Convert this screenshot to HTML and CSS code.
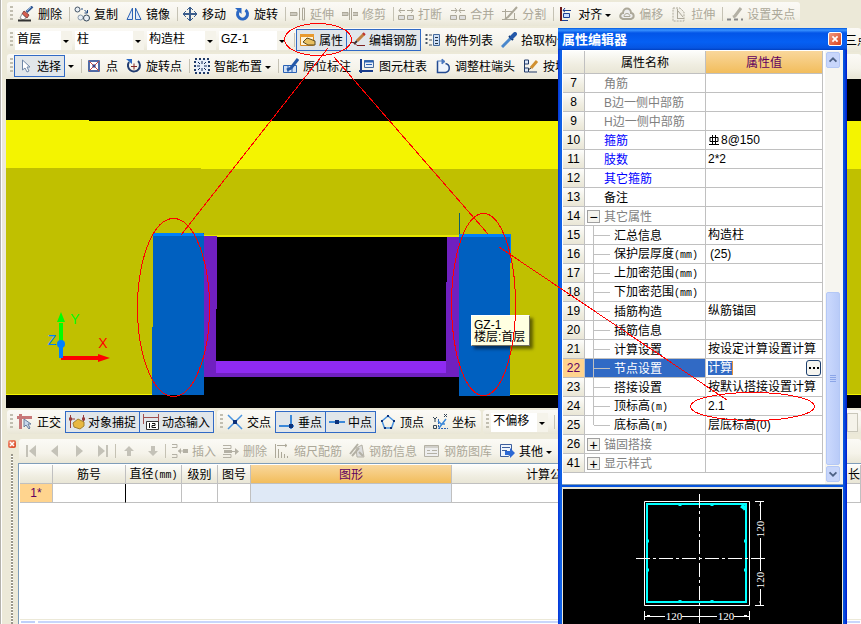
FILE: index.html
```html
<!DOCTYPE html>
<html lang="zh-CN">
<head>
<meta charset="utf-8">
<title>属性编辑器</title>
<link rel="stylesheet" href="styles.css">
</head>
<body>
<div class="app">
  <header class="bars">
    <div class="bar bar-fit">
      <i class="grip"></i>
      <button class="tool"><svg viewBox="0 0 16 16"><path d="M14.500 .5 8.500 6" stroke="#345a94" stroke-width="2.500"/><path d="M13 1 9 5" stroke="#8fb4e0"/><path d="M6 5l5 4-2 3-5-4z" fill="#d86050" stroke="#844"/><path d="M4 8l4 4-3 2-3-2z" fill="#fff" stroke="#999"/><path d="M0 14.500h13" stroke="#333" stroke-width="2"/></svg>删除</button>
      <i class="sep"></i>
      <button class="tool"><svg viewBox="0 0 16 16"><circle cx="3.500" cy="3.500" r="2.500" fill="#e8eef4" stroke="#456"/><circle cx="6.500" cy="11.500" r="2.500" fill="#e8eef4" stroke="#89a"/><circle cx="12.500" cy="12" r="3" fill="#e8eef4" stroke="#345"/><path d="M7 3h2M10.500 4l3 3m0-3v3h-3" stroke="#234a80" fill="none"/></svg>复制</button>
      <button class="tool"><svg viewBox="0 0 16 16"><path d="M6.500 2v11.500H1z" fill="#dfe9f8" stroke="#2b62b4"/><path d="M9.500 2v11.500H15z" fill="#dfe9f8" stroke="#2b62b4"/></svg>镜像</button>
      <i class="sep"></i>
      <button class="tool"><svg viewBox="0 0 16 16"><path d="M8 1v14M1 8h14" stroke="#3c5e8c" stroke-width="2"/><path d="M5 4l3-3 3 3M5 12l3 3 3-3M4 5 1 8l3 3M12 5l3 3-3 3" fill="none" stroke="#3c5e8c"/></svg>移动</button>
      <button class="tool"><svg viewBox="0 0 16 16"><path d="M11.500 4a5 5 0 1 1-7 1" fill="none" stroke="#2b68c4" stroke-width="3"/><path d="M1 2h6.500v6z" fill="#2b68c4"/></svg>旋转</button>
      <i class="sep"></i>
      <button class="tool" disabled><svg viewBox="0 0 16 16"><path d="M0 6.500h7v3H0z" fill="#ccc9be" stroke="#aca899"/><path d="M9.500 2v12M12.500 2h2v12h-2z" stroke="#aca899" fill="none"/></svg>延伸</button>
      <button class="tool" disabled><svg viewBox="0 0 16 16"><path d="M0 6.500h6v3H0zM11 6.500h5v3h-5" fill="#ccc9be" stroke="#aca899"/><path d="M7.500 2v12M9.500 2v12" stroke="#aca899" fill="none"/></svg>修剪</button>
      <i class="sep"></i>
      <button class="tool" disabled><svg viewBox="0 0 16 16"><path d="M.5 9.500h6v4h-6zM9.500 9.500h6v4h-6z" fill="#ddd" stroke="#aca899"/><path d="M1 4.500h6M9 4.500h6M3 2 1 4.500 3 7M13 2l2 2.500L13 7" fill="none" stroke="#aca899"/></svg>打断</button>
      <button class="tool" disabled><svg viewBox="0 0 16 16"><path d="M.5 9.500h6v4h-6zM9.500 9.500h6v4h-6z" fill="#ddd" stroke="#aca899"/><path d="M1 4.500h6M9 4.500h6M5 2l2 2.500L5 7M11 2 9 4.500 11 7" fill="none" stroke="#aca899"/></svg>合并</button>
      <button class="tool" disabled><svg viewBox="0 0 16 16"><path d="M0 5.500h11M3.500 3v11M0 13.500h15M12.500 7v7" fill="none" stroke="#aca899"/><path d="M15 1 6 11l-3 2" fill="none" stroke="#aca899" stroke-width="2"/></svg>分割</button>
      <i class="sep"></i>
      <button class="tool"><svg viewBox="0 0 16 16"><path d="M3 1v14" stroke="#701818" stroke-width="2"/><path d="M5.500 7.500h6v4h-6z" fill="#c8dcff" stroke="#1c3f94"/><path d="M5 4.500h8M7 2 5 4.500 7 6M4 14.500h6" fill="none" stroke="#1c3f94"/></svg>对齐<i class="caret"></i></button>
      <button class="tool" disabled><svg viewBox="0 0 16 16"><path d="M4 13c-5-2-2-6 0-6 0-6 8-6 8 0 3 0 4 5 0 6z" fill="#eee" stroke="#aca899" stroke-width="2"/><path d="M5 10.500c0-4 6-4 6 0z" fill="none" stroke="#aca899"/></svg>偏移</button>
      <button class="tool" disabled><svg viewBox="0 0 16 16"><path d="M2 2h7l4 4v9H2z" fill="#f2f0e8" stroke="#aca899" stroke-dasharray="2 1"/><path d="M6.500 3v9M6 12.500h7M7 5l5 6" stroke="#aca899" fill="none"/></svg>拉伸</button>
      <i class="sep"></i>
      <button class="tool" disabled><svg viewBox="0 0 16 16"><path d="M14 2 8 10l-2 1" stroke="#b4b1a5" stroke-width="3"/><path d="M0 13.500h4m3 0h4m3 0h2" stroke="#888" stroke-width="2"/></svg>设置夹点</button>
    </div>
    <div class="bar">
      <i class="grip"></i>
      <span class="combo combo-s"><select aria-label="楼层"><option>首层</option></select></span>
      <span class="combo"><select aria-label="构件类型"><option>柱</option></select></span>
      <span class="combo"><select aria-label="构件分类"><option>构造柱</option></select></span>
      <span class="combo"><select aria-label="构件"><option>GZ-1</option></select></span>
      <i class="sep"></i>
      <button class="tool on"><svg viewBox="0 0 16 16"><path d="M.5 2.500h13v11H.5z" fill="#fff4d8" stroke="#d98a20"/><path d="M0 3.500h14" stroke="#e89a30" stroke-width="3"/><path d="M3 10l4-4 3 1 5 2v4H8z" fill="#e8c060" stroke="#5a4a20"/></svg>属性</button>
      <button class="tool on"><svg viewBox="0 0 16 16"><path d="M14 2 7 9" stroke="#c08040" stroke-width="3"/><path d="M7 9l-3 3" stroke="#333" stroke-width="2"/><path d="M0 10.500h4l3 3h8" fill="none" stroke="#802020"/><path d="M13 1l2 2" stroke="#c03030" stroke-width="2"/></svg>编辑钢筋</button>
      <button class="tool"><svg viewBox="0 0 16 16"><path d="M1.500 2v12" stroke="#456" stroke-width="2" stroke-dasharray="2 2"/><path d="M4 3h3M4 8h3M4 13h3" stroke="#456"/><path d="M8.500 2.500h6v11h-6z" fill="#cfe0f6" stroke="#456a9c"/><path d="M10 5.500h3M10 8.500h3M10 11.500h3" stroke="#234"/></svg>构件列表</button>
      <button class="tool"><svg viewBox="0 0 16 16"><path d="M10 6 3 13l-2 2" stroke="#4a88cc" stroke-width="3"/><path d="M8 4l4 4" stroke="#103878" stroke-width="2"/><path d="M14 2l-3 3" stroke="#2458a8" stroke-width="4" stroke-linecap="round"/></svg>拾取构件</button>
      <span class="stretch"></span>
      <span class="edge">三点</span>
    </div>
    <div class="bar">
      <i class="grip"></i>
      <button class="tool on"><svg viewBox="0 0 16 16"><path d="M4.500 2v10l2.500-2 2 4 2-1-2-4h3z" fill="#fff" stroke="#7088a8"/></svg>选择</button>
      <button class="drop" aria-label="选择选项"><i class="caret"></i></button>
      <i class="sep"></i>
      <button class="tool"><svg viewBox="0 0 16 16"><path d="M3 3h10v10H3z" fill="#fff" stroke="#183c8c" stroke-width="1.500"/><path d="M3 3l10 10M13 3 3 13" stroke="#c04848"/><path d="M6 8h4M8 6v4" stroke="#183c8c"/></svg>点</button>
      <button class="tool"><svg viewBox="0 0 16 16"><path d="M3 4a6 6 0 1 0 9-1" fill="none" stroke="#223c70" stroke-width="2"/><path d="M0 1h6v5z" fill="#2b68c4"/><path d="M5 8.500h6M8 5.500v6" stroke="#802828"/></svg>旋转点</button>
      <i class="sep"></i>
      <button class="tool"><svg viewBox="0 0 16 16"><path d="M1 1h14v14H1z" fill="#e6eefa" stroke="#203a68" stroke-width="2" stroke-dasharray="2 2"/><path d="M8 3v3M8 10v3M3 8h3M10 8h3M4 4l2 2M12 4l-2 2M4 12l2-2M12 12l-2-2" stroke="#102858"/></svg>智能布置<i class="caret"></i></button>
      <i class="sep"></i>
      <button class="tool"><svg viewBox="0 0 16 16"><path d="M.5 7.500h13v7H.5zM5 7v7M9 7v7" fill="#cfe0f6" stroke="#2b62b4"/><path d="M15 1 8 10l-4 2" fill="none" stroke="#2458a8" stroke-width="3"/></svg>原位标注</button>
      <button class="tool"><svg viewBox="0 0 16 16"><path d="M2 1v14M0 13h14" stroke="#183c8c" stroke-width="2"/><path d="M5.500 2.500h9v7h-9z" fill="#e6eefa" stroke="#456a9c"/><path d="M5 3.500h9" stroke="#2b62b4" stroke-width="2"/><path d="M7 6.500h6" stroke="#2b62b4"/></svg>图元柱表</button>
      <button class="tool"><svg viewBox="0 0 16 16"><path d="M2.500 3v11.500h8c5-1 5-8 0-9" fill="#eef4fc" stroke="#234a90" stroke-width="1.500"/><path d="M2 3h6M7 1v5l3-2.500z" stroke="#4a78c0" fill="#4a78c0"/></svg>调整柱端头</button>
      <button class="tool"><svg viewBox="0 0 16 16"><path d="M1.500 2h4v4h-4zM1.500 10h4v4h-4zM1.500 6v4M6 14h8" fill="#dde8f8" stroke="#203a68"/><path d="M14 3 8 10" stroke="#d09030" stroke-width="3"/><path d="M8 10l-3 2" stroke="#333"/></svg>按墙</button>
    </div>
  </header>

  <main class="view">
    <svg class="scene" viewBox="6 79 855 329" preserveAspectRatio="xMinYMin slice" shape-rendering="crispEdges">
      <path d="M6 79h855v329H6z"/>
      <path d="M6 120h83v1h772v48H6z" fill="#f4f400"/>
      <path d="M6 168h195v1h660v226H6z" fill="#c0c000"/>
      <path d="M6 394h855v1H6z" fill="#f4f400"/>
      <path d="M204 235h255v2H204z" fill="#e6e600"/>
      <path d="M203 237h257v171H203z"/>
      <path d="M204 236h13v73h-1v68h-12zM447 237h13v140h-14v-95h1zM204 373h256v4H204z" fill="#7020c0"/>
      <path d="M216 361h230v12H216z" fill="#8f2af2"/>
      <path d="M153 233h51v162h-52v-68h1z" fill="#0060c0"/>
      <path d="M153 233h50v1h1v2h-51z" fill="#0080f8"/>
      <path d="M459 234h52v29h-1v133h-51z" fill="#0060c0"/>
      <path d="M459 234h52v29h-1v-26h-51z" fill="#0080f8"/>
      <path d="M459 213h1v21h-1z" fill="#106068"/>
      <g shape-rendering="auto">
        <path d="M59 323h4v20h-4zM61 312l4 10h-8z" fill="#0f0"/>
        <path d="M61 356h37v-2l12 4-12 4v-2H61z" fill="#f00"/>
        <path d="M59 344h4v14h-4z" fill="#0080ff"/><circle cx="61" cy="344" r="4" fill="#0080ff"/>
        <g class="axis"><text x="75" y="324" fill="#0f0">Y</text><text x="103" y="348" fill="#f00">X</text><text x="52" y="345" fill="#0080ff">Z</text></g>
      </g>
    </svg>
    <div class="tip" role="tooltip">GZ-1<br>楼层:首层</div>
  </main>

  <div class="snap">
    <div class="bar bar-fit">
      <i class="grip"></i>
      <button class="tool"><svg viewBox="0 0 16 16"><path d="M0 3.500h15M3.500 0v15" stroke="#c87878" stroke-width="3"/><path d="M7 5v8l2-2 3 4 1-1-2-4h3z" fill="#c8d8ec" stroke="#667c9c"/></svg>正交</button>
      <button class="tool on"><svg viewBox="0 0 16 16"><path d="M1.500 1v13M14.500 1v8M1 5h5" stroke="#983c3c"/><path d="M0 5h3M13 5h3" stroke="#983c3c" stroke-width="3"/><path d="M4 9l5-4 6 3v4l-4 3-6-2z" fill="#e8b840" stroke="#a08030"/></svg>对象捕捉</button>
      <button class="tool on"><svg viewBox="0 0 16 16"><path d="M.5 0v10M15.500 0v8M0 3.500h16" stroke="#a05050"/><path d="M3.500 7.500h12v8h-12z" fill="#fff" stroke="#333"/><path d="M6.500 9v5M9 9.500h3v2H9v2h4" stroke="#111" fill="none"/></svg>动态输入</button>
    </div>
    <div class="bar bar-fit">
      <i class="grip"></i>
      <button class="tool"><svg viewBox="0 0 16 16"><path d="M1 1l14 14M15 1 1 15" stroke="#4a94e0" stroke-width="1.500"/><path d="M6 6h4v4H6z" fill="#0c3078"/></svg>交点</button>
      <button class="tool on"><svg viewBox="0 0 16 16"><path d="M0 12h15M12 1v14" stroke="#3c88d8" stroke-width="2"/><path d="M10 10h4v4h-4z" fill="#0c3078"/></svg>垂点</button>
      <button class="tool on"><svg viewBox="0 0 16 16"><path d="M0 8h16" stroke="#3c88d8" stroke-width="2"/><path d="M6 6h4v4H6z" fill="#0c3078"/></svg>中点</button>
      <button class="tool"><svg viewBox="0 0 16 16"><path d="M8 2l6 5-2.500 7h-7L2 7z" fill="none" stroke="#4a94e0" stroke-width="1.500"/><path d="M7 1h2v2H7zM13 6h2v2h-2zM1 6h2v2H1zM4 13h2v2H4zM10 13h2v2h-2z" fill="#0c3078"/></svg>顶点</button>
      <button class="tool"><svg viewBox="0 0 16 16"><path d="M6.500 5v9.500H16" fill="none" stroke="#2b62b4" stroke-dasharray="2 1"/><path d="M7 14l7-9M6 7l3 3h4" stroke="#3c88d8" stroke-width="1.500" fill="none"/><path d="M1 3l2 2 2-2M3 5v3M12 0l3 3m0-3-3 3M1.500 11.500h3v3h-3z" stroke="#345" fill="none"/></svg>坐标</button>
    </div>
    <div class="bar bar-rest">
      <i class="grip"></i>
      <span class="combo combo-s"><select aria-label="偏移方式"><option>不偏移</option></select></span>
      <i class="sep"></i>
      <span class="stretch"></span>
      <input class="num" type="number" aria-label="偏移值">
    </div>
  </div>

  <section class="dock">
    <div class="handle"><button class="x x-small" aria-label="关闭"><svg viewBox="0 0 8 8"><path d="M2 2l4 4M6 2 2 6" stroke="#fff" stroke-width="1.500"/></svg></button><i class="dots"></i></div>
    <div class="dock-body">
      <div class="bar edit">
        <button class="nav" aria-label="第一条" disabled><svg viewBox="0 0 12 12"><path d="M2 0v12" stroke="#c4c2b8" stroke-width="2"/><path d="M11 0v12L4 6z" fill="#c4c2b8"/></svg></button>
        <button class="nav" aria-label="上一条" disabled><svg viewBox="0 0 12 12"><path d="M9 0v12L2 6z" fill="#c4c2b8"/></svg></button>
        <button class="nav" aria-label="下一条" disabled><svg viewBox="0 0 12 12"><path d="M3 0v12l7-6z" fill="#c4c2b8"/></svg></button>
        <button class="nav" aria-label="最后一条" disabled><svg viewBox="0 0 12 12"><path d="M10 0v12" stroke="#c4c2b8" stroke-width="2"/><path d="M1 0v12l7-6z" fill="#c4c2b8"/></svg></button>
        <i class="sep"></i>
        <button class="nav" aria-label="上移" disabled><svg viewBox="0 0 12 12"><path d="M6 1l5 5H8v5H4V6H1z" fill="#c4c2b8"/></svg></button>
        <button class="nav" aria-label="下移" disabled><svg viewBox="0 0 12 12"><path d="M6 11l5-5H8V1H4v5H1z" fill="#c4c2b8"/></svg></button>
        <i class="sep sep-wide"></i>
        <button class="tool" disabled><svg viewBox="0 0 16 16"><path d="M0 1.500h5v3H0M0 11.500h5v3H0M6 8h5" stroke="#b4b1a5" fill="none"/><path d="M9 5v6L6 8zM11 6h5v4h-5z" fill="#b4b1a5"/></svg>插入</button>
        <button class="tool" disabled><svg viewBox="0 0 16 16"><path d="M0 2.500h8v3H0M0 11.500h8v3H0M1 8.500h12" stroke="#b4b1a5" fill="none"/><path d="M12 5v7l4-3.500zM1 7h8v3H1z" fill="#b4b1a5"/></svg>删除</button>
        <button class="tool" disabled><svg viewBox="0 0 16 16"><path d="M1.500 1v14M4.500 6v9M7.500 9v6M10.500 11v4M13.500 13v2M3 2.500h10M11 1l2 1.500L11 4" stroke="#aca899" fill="none"/></svg>缩尺配筋</button>
        <button class="tool" disabled><svg viewBox="0 0 16 16"><path d="M7 5l6-3 2 12H8z" fill="#ddd" stroke="#b4b1a5"/><path d="M1 11 9 1M3 13l7-8M10 9l4 4" stroke="#b4b1a5" stroke-width="2"/></svg>钢筋信息</button>
        <button class="tool" disabled><svg viewBox="0 0 16 16"><path d="M.5 2.500h14v11H.5z" fill="#eee" stroke="#b4b1a5"/><path d="M1 4h13M3 7.500h3m2 0h5M3 10.500h10" stroke="#b4b1a5"/></svg>钢筋图库</button>
        <button class="tool"><svg viewBox="0 0 16 16"><path d="M1.500 1.500h11v8l-3 4h-8z" fill="#eef4fc" stroke="#3c5e9c"/><path d="M3 4.500h8M3 7.500h5" stroke="#3c5e9c"/><path d="M6 8h5V5l5 5-5 5v-3H6z" fill="#2b68d4"/></svg>其他<i class="caret"></i></button>
      </div>
      <div class="sheet">
        <table class="bars-table">
          <colgroup><col class="c1"><col class="c2"><col class="c3"><col class="c4"><col class="c5"><col class="c6"><col class="c7"><col><col class="c9"></colgroup>
          <thead><tr><th></th><th>筋号</th><th>直径<span class="m">(mm)</span></th><th>级别</th><th>图号</th><th class="hot">图形</th><th>计算公式</th><th></th><th class="len">长度</th></tr></thead>
          <tbody><tr><th class="cur">1*</th><td class="caret-cell"></td><td></td><td></td><td></td><td class="pick"></td><td></td><td></td><td></td></tr></tbody>
        </table>
        <div class="hscroll"><i class="hbtn"></i><i class="hthumb"></i></div>
      </div>
    </div>
  </section>

  <aside class="win">
    <div class="title"><h1>属性编辑器</h1><button class="x" aria-label="关闭属性编辑器"><svg viewBox="0 0 14 14"><path d="M4 4l6 6M10 4l-6 6" stroke="#fff" stroke-width="2"/></svg></button></div>
    <div class="props">
      <table>
        <colgroup><col class="p1"><col class="p2"><col></colgroup>
        <thead><tr><th></th><th>属性名称</th><th class="hot">属性值</th></tr></thead>
        <tbody>
          <tr><th>7</th><td class="g">角筋</td><td></td></tr>
          <tr><th>8</th><td class="g">B边一侧中部筋</td><td></td></tr>
          <tr><th>9</th><td class="g">H边一侧中部筋</td><td></td></tr>
          <tr><th>10</th><td class="b">箍筋</td><td><svg class="rebar" viewBox="0 0 12 12"><path d="M2 3.500h8v4H2zM4.500 1v9M7.500 1v9M1 10.500h10" fill="none" stroke="#000"/></svg>8@150</td></tr>
          <tr><th>11</th><td class="b">肢数</td><td>2*2</td></tr>
          <tr><th>12</th><td class="b">其它箍筋</td><td></td></tr>
          <tr><th>13</th><td>备注</td><td></td></tr>
          <tr><th>14</th><td class="g"><button class="fold" aria-label="折叠">−</button>其它属性</td><td></td></tr>
          <tr><th>15</th><td class="k">汇总信息</td><td>构造柱</td></tr>
          <tr><th>16</th><td class="k">保护层厚度<span class="m">(mm)</span></td><td><span class="in">(25)</span></td></tr>
          <tr><th>17</th><td class="k">上加密范围<span class="m">(mm)</span></td><td></td></tr>
          <tr><th>18</th><td class="k">下加密范围<span class="m">(mm)</span></td><td></td></tr>
          <tr><th>19</th><td class="k">插筋构造</td><td>纵筋锚固</td></tr>
          <tr><th>20</th><td class="k">插筋信息</td><td></td></tr>
          <tr><th>21</th><td class="k">计算设置</td><td>按设定计算设置计算</td></tr>
          <tr class="sel"><th>22</th><td class="k">节点设置</td><td><div class="field"><input value="计算" aria-label="节点设置"><button aria-label="更多"><svg viewBox="0 0 13 14"><path d="M2 6h2v2H2zM6 6h2v2H6zM10 6h2v2h-2z"/></svg></button></div></td></tr>
          <tr><th>23</th><td class="k">搭接设置</td><td>按默认搭接设置计算</td></tr>
          <tr><th>24</th><td class="k">顶标高<span class="m">(m)</span></td><td>2.1</td></tr>
          <tr><th>25</th><td class="k last">底标高<span class="m">(m)</span></td><td>层底标高(0)</td></tr>
          <tr><th>26</th><td class="g"><button class="fold" aria-label="展开">+</button>锚固搭接</td><td></td></tr>
          <tr><th>41</th><td class="g"><button class="fold" aria-label="展开">+</button>显示样式</td><td></td></tr>
        </tbody>
      </table>
      <div class="vscroll">
        <i class="vbtn"><svg viewBox="0 0 14 14"><path d="M3 9l4-4 4 4" fill="none" stroke="#4d6185" stroke-width="2"/></svg></i>
        <i class="vtrack"></i>
        <i class="vthumb"></i>
        <i class="vbtn"><svg viewBox="0 0 14 14"><path d="M3 5l4 4 4-4" fill="none" stroke="#4d6185" stroke-width="2"/></svg></i>
      </div>
    </div>
    <div class="preview">
      <svg viewBox="563 489 279 135" width="279" height="135" fill="none" stroke="#fff">
        <path d="M644.500 501.500h105v104h-105z"/>
        <path d="M647 504h99v98h-99z" stroke="#0ff" stroke-width="2"/>
        <path d="M699.500 494v130" stroke-dasharray="14 3 3 3"/>
        <path d="M636 558.500h130" stroke-dasharray="14 3 3 3"/>
        <path d="M755 501.500h9M755 605.500h9M760.500 501v19M760.500 538v33M760.500 589v16M755 558.500h10M759 505h2M759 602h2M644.500 611v9M749.500 611v9M645 616.500h20M682 616.500h35M734 616.500h15M647 615.500h3M744 615.500h3"/>
        <path d="M741 506l4 3M743 505l2 5M680 505v1M712 505v1M680 600v1M712 600v1M648 541h1M648 570h1M744 541h1M744 570h1" stroke="#0ff" stroke-width="3"/>
        <g class="dim"><text x="674" y="620">120</text><text x="726" y="620">120</text><text transform="translate(764 529) rotate(-90)">120</text><text transform="translate(764 580) rotate(-90)">120</text></g>
      </svg>
    </div>
  </aside>

  <svg class="marks" viewBox="0 0 861 624" width="861" height="624" fill="none" stroke="#f00" shape-rendering="crispEdges">
    <ellipse cx="318" cy="39.500" rx="33.500" ry="16"/>
    <ellipse cx="173.500" cy="307.500" rx="36" ry="89"/>
    <ellipse cx="483.500" cy="304.500" rx="32" ry="91"/>
    <ellipse cx="752.500" cy="406.500" rx="62" ry="14"/>
    <path d="M328 48 181 235M334 57l154 177M499 247l228 153"/>
  </svg>
</div>
</body>
</html>
```
FILE: styles.css
```css
* { box-sizing: border-box; }

body {
  margin: 0;
  font: 12px/14px "Liberation Sans", "Noto Sans CJK SC", sans-serif;
  color: #000;
  background: #ece9d8;
}

button, input, select { font: inherit; color: inherit; }
button { border: 0; background: none; padding: 0; }
h1 { margin: 0; font-size: 13px; }
i { display: block; flex: none; }

.app {
  position: relative;
  display: flex;
  flex-direction: column;
  height: 100vh;
  padding-left: 6px;
  overflow: hidden;
  background: linear-gradient(90deg, #b4b2ac 1px, #fff 1px, #fff 2px, #ece9d8 2px);
}

/* toolbars */
.bars {
  display: flex;
  flex-direction: column;
  gap: 2px;
  flex: none;
  height: 79px;
  padding: 2px 0 0 1px;
}

.bar {
  display: flex;
  align-items: center;
  flex: none;
  height: 24px;
  padding-left: 3px;
  overflow: hidden;
  white-space: nowrap;
  border-radius: 3px;
  background: linear-gradient(#fbfaf6, #f5f3ea 60%, #e9e6d6);
}

.bar-fit { align-self: flex-start; padding-right: 1px; }
.bar-rest { flex: 1; }

.grip {
  width: 3px;
  height: 16px;
  background: repeating-linear-gradient(#c1beb0 0 2px, transparent 2px 4px);
}

.sep { width: 1px; height: 14px; margin-left: 3px; background: #c5c2b4; }
.combo + .sep { margin-right: 1px; }

.tool {
  display: flex;
  align-items: center;
  flex: none;
  gap: 3px;
  height: 22px;
  padding: 2px 4px 0;
}

.bars .grip + .tool { margin-left: 1px; }
.tool svg { width: 16px; height: 16px; margin: -2px 1px 0 0; flex: none; }
.tool:disabled { color: #aca899; }
.tool.on { border: 1px solid #316ac5; padding: 2px 3px 0; background: #e1e6ea; }
.tool.on + .tool.on { margin-left: -1px; }
.tool.on svg { margin-right: 0; }

.caret {
  border: 3px solid transparent;
  border-top-color: #000;
  border-bottom: 0;
}

.drop { padding: 0 4px 0 3px; height: 22px; }

.combo {
  position: relative;
  flex: none;
  width: 69px;
  height: 19px;
  margin-right: 3px;
  background: linear-gradient(90deg, #fff calc(100% - 11px), #f5f3ea 0);
}

.combo-s { width: 57px; }
.grip + .combo { margin-left: 2px; }

.combo::after {
  content: "";
  position: absolute;
  right: 3px;
  top: 9px;
  border: 3px solid transparent;
  border-top-color: #000;
  border-bottom: 0;
}

.combo select {
  display: block;
  width: 100%;
  height: 17px;
  padding: 0 2px;
  border: 0;
  appearance: none;
  background: none;
}

.stretch { flex: 1; }
.edge { flex: none; width: 16px; padding-top: 1px; }

/* model view */
.view { position: relative; flex: none; height: 329px; background: #000; }
.scene { display: block; width: 100%; height: 100%; }
.axis { font: 14px "Liberation Sans", sans-serif; text-anchor: middle; }

.tip {
  position: absolute;
  left: 465px;
  top: 236px;
  padding: 3px 4px 2px 2px;
  border: 1px solid #fff;
  border-right-color: #716f64;
  border-bottom-color: #716f64;
  line-height: 12px;
  background: #ffffe1;
  box-shadow: 3px 3px 3px rgba(0, 0, 0, .5);
}

/* snap bar */
.snap { display: flex; gap: 2px; flex: none; height: 30px; padding: 2px 0 0 1px; }

.num {
  width: 11px;
  height: 19px;
  margin-right: 3px;
  padding: 0;
  border: 1px solid #c9c7ba;
  background: #f5f3ea;
}

/* rebar dock */
.dock { display: flex; flex: 1; min-height: 0; padding-top: 1px; }

.handle {
  display: flex;
  flex-direction: column;
  gap: 6px;
  width: 12px;
  padding: 1px 0 0 2px;
}

.dots {
  flex: 1;
  width: 2px;
  margin-left: 3px;
  background: repeating-linear-gradient(#99968a 0 2px, #fff 2px 3px);
}

.x {
  display: flex;
  width: 14px;
  height: 14px;
  border: 1px solid #fff;
  border-radius: 2px;
  background: linear-gradient(135deg, #f09a80, #d9401c);
}

.x svg { width: 100%; height: 100%; }
.x-small { width: 8px; height: 8px; border: 0; }

.dock-body { display: flex; flex-direction: column; flex: 1; min-width: 0; }
.edit { margin-left: 1px; padding-left: 0; }
.edit .tool { padding-left: 3px; }
.nav { width: 24px; height: 22px; flex: none; padding: 0 6px; }
.nav svg { display: block; width: 12px; height: 12px; }
.edit .sep { margin: 0 1px 0 0; }
.edit .sep-wide { margin-right: 3px; }

.sheet {
  display: flex;
  flex-direction: column;
  flex: 1;
  min-height: 0;
  padding: 1px 0 0 1px;
  border: solid #7f9db9;
  border-width: 1px 0 0 1px;
  background: #fff;
}

table { border-collapse: separate; border-spacing: 0; table-layout: fixed; width: 100%; }

th, td {
  height: 19px;
  padding: 0;
  border: solid #c0c0c0;
  border-width: 0 1px 1px 0;
  font-weight: 400;
  white-space: nowrap;
  overflow: hidden;
}

th { background: linear-gradient(#fdfdfb, #f0eee2 60%, #e9e6d6); }
thead th { padding-top: 2px; }
.hot { color: #600060; background: linear-gradient(#f9d79c, #f2bd5c); }
.bars-table .cur { color: #600060; background: #ffd48e; }
.pick { background: #dfe9f6; }
.caret-cell { border-right-color: #000; }
.m { font: 10px/14px "Liberation Mono", monospace; }

.c1 { width: 33px; }
.c2 { width: 73px; }
.c3 { width: 56px; }
.c4 { width: 36px; }
.c5 { width: 33px; }
.c6 { width: 201px; }
.c7 { width: 197px; }
.c9 { width: 38px; }
.len { padding-left: 25px; text-align: left; }

.hscroll {
  display: flex;
  gap: 3px;
  height: 5px;
  margin-top: auto;
  padding: 1px;
  border-top: 1px solid #ece9d8;
}

.hbtn { width: 14px; background: #bfd0fa; }
.hthumb { flex: 1; background: #c8d6fb; }

/* property window */
.win {
  position: absolute;
  left: 558px;
  top: 28px;
  bottom: 0;
  display: flex;
  flex-direction: column;
  width: 289px;
  padding: 0 4px;
  overflow: hidden;
  background: linear-gradient(90deg, #0831d9, #0855dd 2px, #166aee 3px, #0855dd 4px, #0855dd calc(100% - 3px), #0019cf);
}

.title {
  display: flex;
  align-items: center;
  justify-content: space-between;
  flex: none;
  height: 22px;
  margin: 0 -4px;
  padding: 0 5px 0 4px;
  color: #fff;
  background: linear-gradient(#0058e0, #3a93ff 2px, #0355e8 5px, #0560f4 14px, #0655e2 20px, #0040c0);
}

.title h1 { padding-top: 1px; }

.props {
  display: flex;
  align-items: stretch;
  flex: none;
  height: 435px;
  padding-top: 1px;
  padding-left: 1px;
  border-bottom: 1px solid #7f9db9;
  background: #fff;
}

.props > table { width: 260px; flex: none; align-self: flex-start; }
.props thead th { height: 23px; }
.p1 { width: 22px; }
.p2 { width: 121px; }
.props td { position: relative; padding-left: 2px; }
.props td:nth-child(2) { padding: 2px 0 0 19px; }
.props td.k { padding-left: 29px; }
.g { color: #808080; }
.b { color: #00f; }

.k::before {
  content: "";
  position: absolute;
  left: 8px;
  top: 0;
  width: 1px;
  height: 19px;
  background: #c0c0c0;
}

.k.last::before { height: 9px; }

.k::after {
  content: "";
  position: absolute;
  left: 9px;
  top: 9px;
  width: 16px;
  height: 1px;
  background: #c0c0c0;
}

.fold {
  position: absolute;
  left: 2px;
  top: 3px;
  width: 13px;
  height: 13px;
  border: 1px solid #a0a0a0;
  font-size: 14px;
  line-height: 8px;
  color: #000;
  background: #f4f3ee;
}

.sel th { color: #600060; background: #ffd48e; }
.sel .k { color: #fff; background: #316ac5; }
.in { margin-left: 2px; }
.rebar { width: 12px; height: 12px; vertical-align: -2px; margin-right: 1px; }

.field { display: flex; justify-content: space-between; align-items: center; height: 18px; padding-right: 1px; }

.field input {
  width: 25px;
  height: 14px;
  padding: 0;
  border: 0;
  border-right: 1px solid #e0903c;
  color: #fff;
  background: #316ac5;
}

.field button {
  width: 15px;
  height: 16px;
  border: 1px solid #1c3f6e;
  border-radius: 3px;
  background: #f6f5f0;
}

.field svg { display: block; }

.vscroll {
  display: flex;
  flex-direction: column;
  gap: 1px;
  flex: 1;
  margin-left: 2px;
  padding: 1px 3px 2px 1px;
  background: #f6f5f0;
}

.vbtn { height: 16px; border: 1px solid #b4c8f6; border-radius: 2px; background: #c8d6fb; }
.vbtn svg { display: block; width: 100%; height: 100%; }
.vtrack { flex: 0 0 222px; }

.vthumb {
  flex: 1;
  border: 1px solid #b4c8f6;
  border-radius: 2px;
  background:
    repeating-linear-gradient(#8ca6e8 0 1px, transparent 1px 2px) center / 6px 8px no-repeat,
    linear-gradient(90deg, #cbd9fd, #b9cbf8);
}

.preview {
  flex: 1;
  margin-top: 2px;
  border: solid #ece9d8;
  border-width: 2px 1px 0;
  background: #000;
}

.preview svg { display: block; }
.dim { font: 11px "Liberation Serif", serif; text-anchor: middle; fill: #fff; stroke: none; }

.marks { position: absolute; left: 0; top: 0; pointer-events: none; }
```
